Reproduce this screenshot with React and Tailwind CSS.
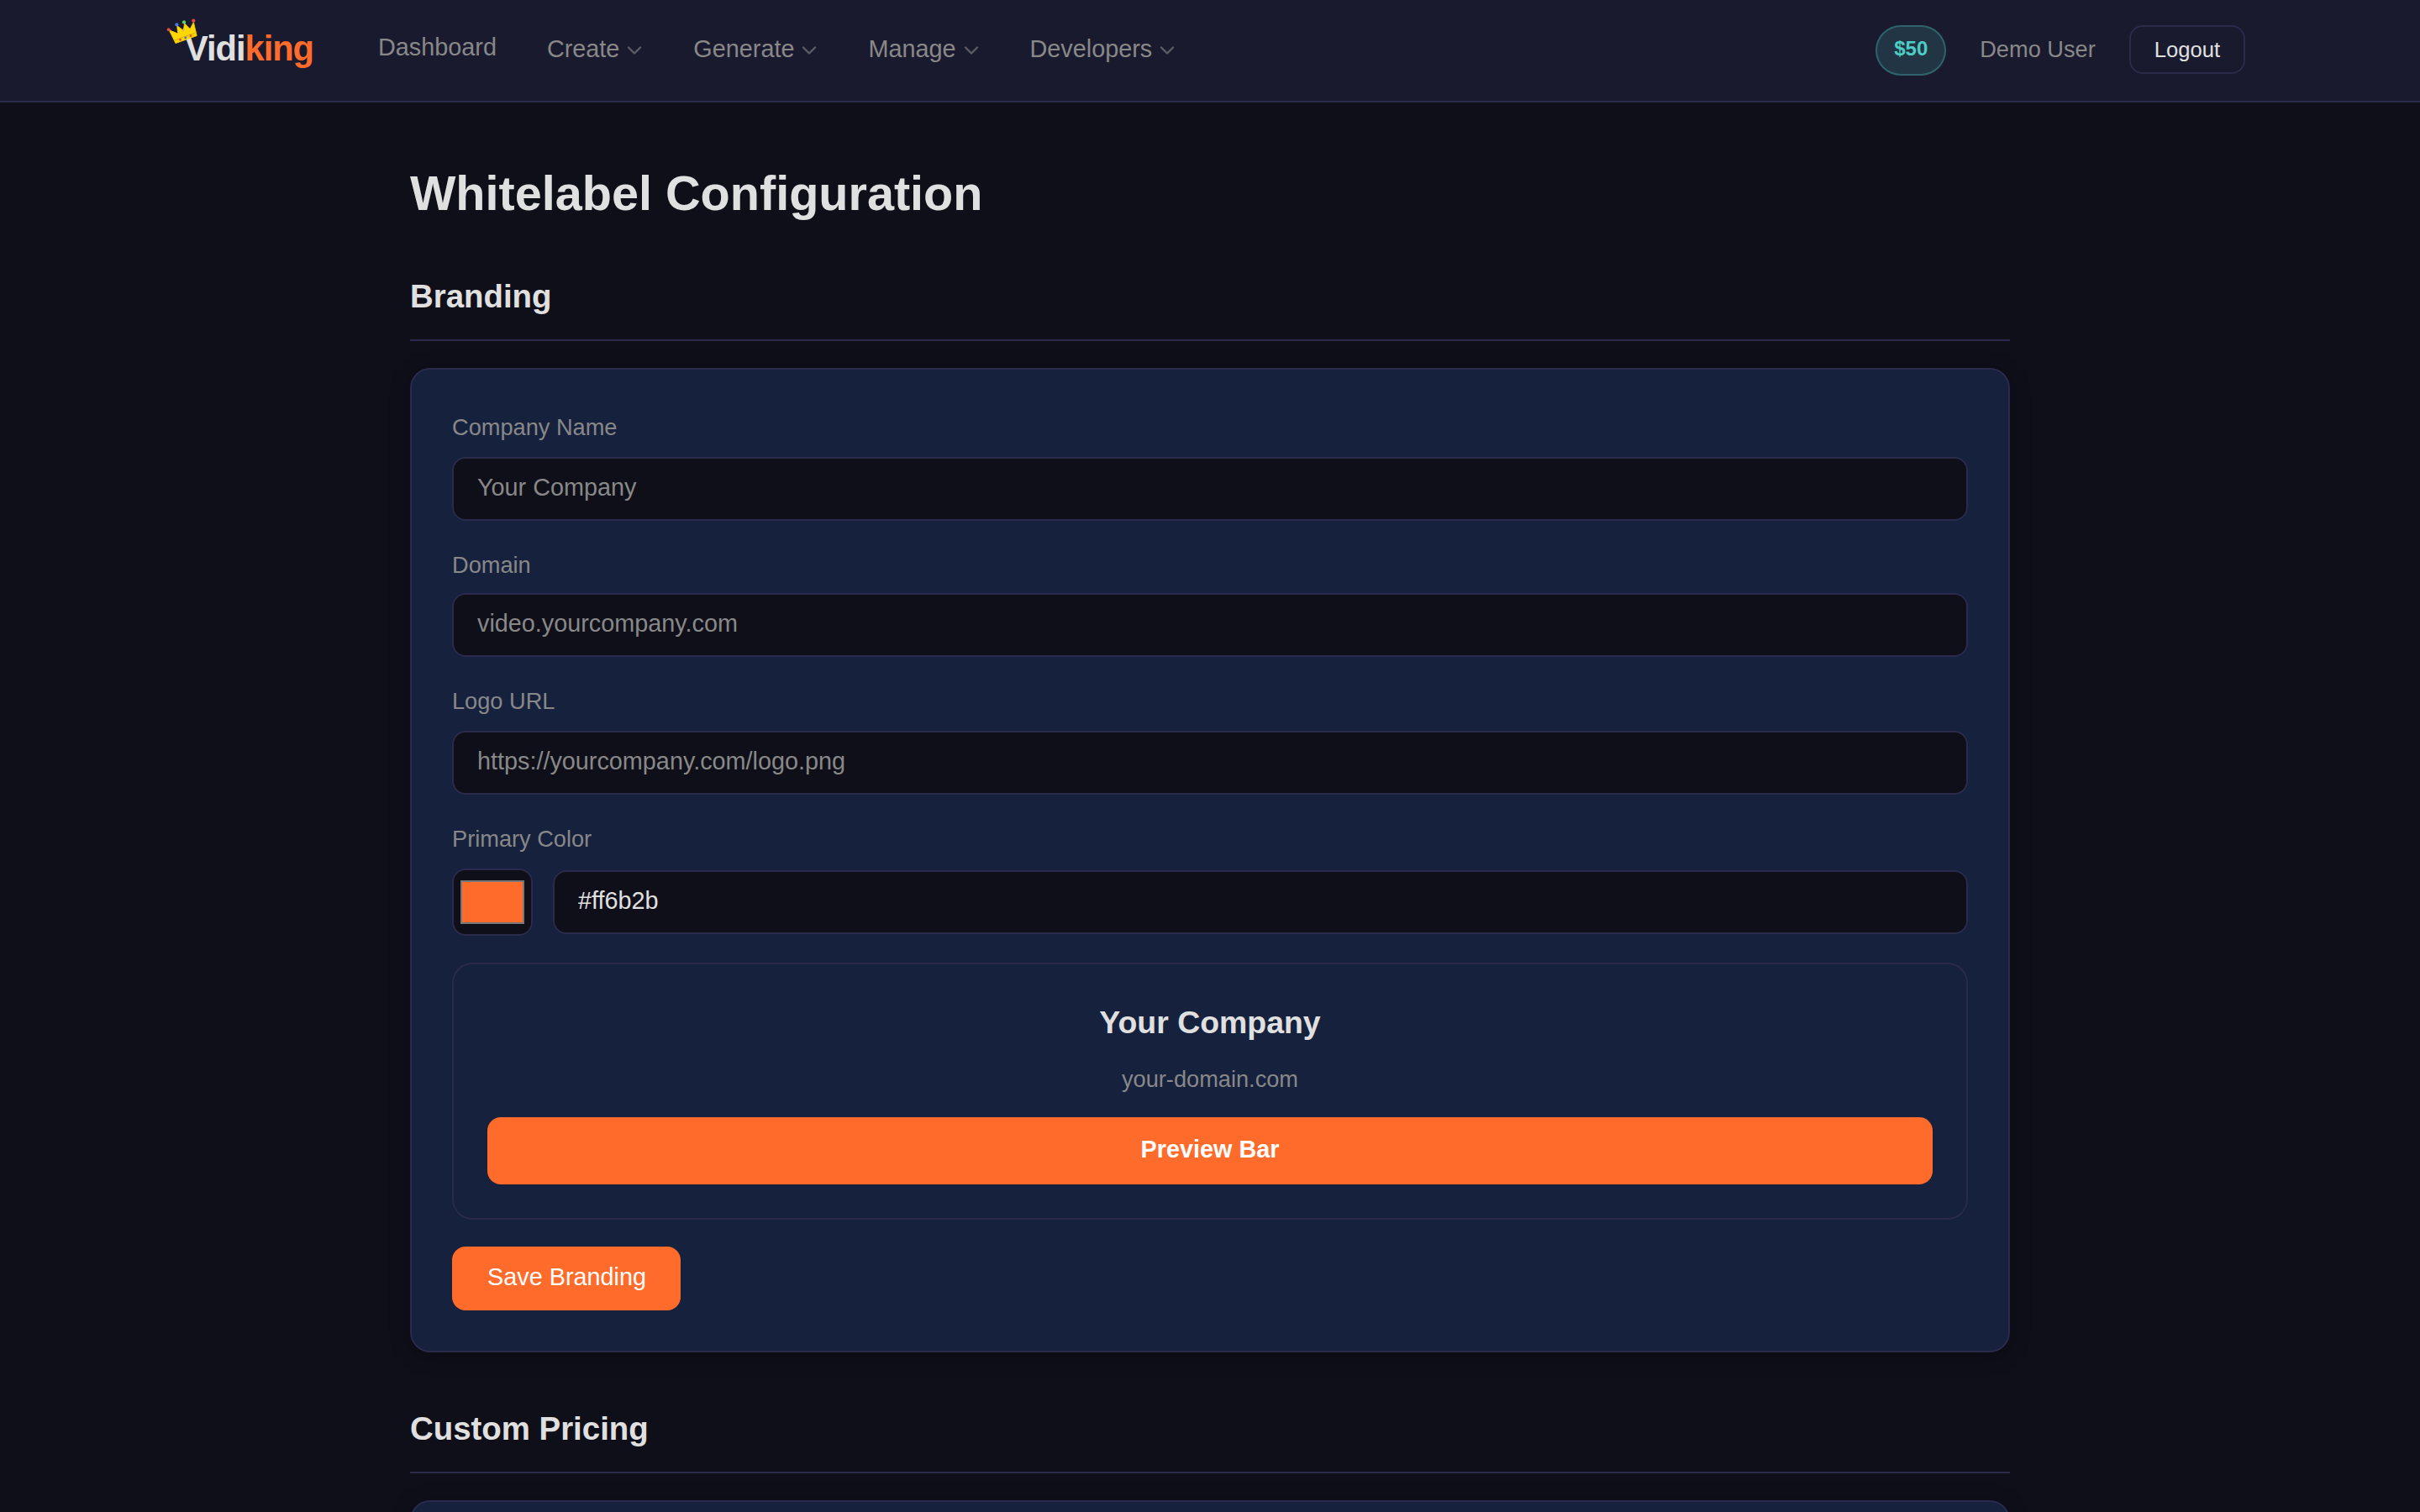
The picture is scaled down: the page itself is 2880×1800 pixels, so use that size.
import React, { useState } from "react";

const menus = ["Create", "Generate", "Manage", "Developers"];

const Crown = () => (
  <svg
    className="absolute top-5 -left-[14px] h-10 w-12"
    viewBox="0 0 48 40"
    fill="none"
  >
    <path
      d="M15 31.6 L7.2 15.8 L17.8 20 L16.6 10.5 L24.3 16.2 L25.6 7.8 L32.2 14.6 L36.4 6.4 L40.2 22.6 Z"
      fill="#ffd700"
      stroke="#ffd700"
      strokeWidth="0.8"
      strokeLinejoin="round"
    />
    <path d="M13.5 28 L39.5 18.7" stroke="#d4a017" strokeWidth="0.8" />
    <circle cx="24" cy="16" r="1.5" fill="#d9c04a" />
    <circle cx="6.7" cy="15.3" r="2" fill="#e54848" />
    <circle cx="16.4" cy="9.4" r="2.1" fill="#4876e5" />
    <circle cx="25" cy="6.4" r="2.1" fill="#48e05a" />
    <circle cx="36.3" cy="4.7" r="2.1" fill="#e54848" />
    <circle cx="20.6" cy="27.3" r="1.4" fill="#e54848" />
    <circle cx="26.8" cy="25" r="1.4" fill="#4876e5" />
    <circle cx="33" cy="22.7" r="1.4" fill="#e54848" />
  </svg>
);

const Chevron = () => (
  <svg className="mt-[2px] h-5 w-5 opacity-60" viewBox="0 0 20 20" fill="none">
    <path
      d="M3 6.5 L10 13.5 L17 6.5"
      stroke="currentColor"
      strokeWidth="2.4"
      strokeLinecap="round"
      strokeLinejoin="round"
    />
  </svg>
);

const Navbar = () => (
  <nav className="h-[122px] border-b-2 border-[#2a2a4a] bg-[#1a1a2e]">
    <div className="mx-auto flex h-[120px] w-[2464px] items-center">
      <div className="relative flex h-full items-center pb-[5px] pl-3 text-[41.6px] leading-[50px] font-bold tracking-[-1px]">
        <span>
          Vidi<span className="text-[#ff6b2b]">king</span>
        </span>
        <Crown />
      </div>

      <div className="mb-[2px] ml-[77px] flex items-center gap-[60px] text-[28.8px] text-[#888]">
        <a className="-mt-1">Dashboard</a>
        {menus.map((menu) => (
          <button key={menu} className="flex items-center gap-2">
            {menu}
            <Chevron />
          </button>
        ))}
      </div>

      <div className="ml-auto flex items-center gap-10">
        <span className="flex h-[60px] items-center rounded-full border-2 border-[#4ecdc4]/30 bg-[#4ecdc4]/15 px-5 pb-[4px] text-[24px] font-bold text-[#4ecdc4]">
          $50
        </span>
        <span className="mb-[2px] text-[27.2px] text-[#888]">Demo User</span>
        <button className="mb-[2px] h-[58px] rounded-[16px] border-2 border-[#2a2a4a] px-7 text-[25.6px]">
          Logout
        </button>
      </div>
    </div>
  </nav>
);

const SectionTitle = ({ children }) => (
  <h2 className="mb-8 h-[80px] border-b-2 border-[#2a2a4a] text-[38.4px] leading-[53px] font-bold">
    {children}
  </h2>
);

const Card = ({ children }) => (
  <div className="rounded-[24px] border-2 border-[#2a2a4a] bg-[#16213e] p-12 shadow-[0_4px_24px_rgba(0,0,0,0.3)]">
    {children}
  </div>
);

const Field = ({ label, children, labelClass = "mb-[15px]" }) => (
  <div className="mb-8">
    <label
      className={`block text-[27.2px] leading-[41px] text-[#888] ${labelClass}`}
    >
      {label}
    </label>
    {children}
  </div>
);

const TextInput = (props) => (
  <input
    type="text"
    className="block h-[76px] w-full min-w-0 rounded-[16px] border-2 border-[#2a2a4a] bg-[#0f0f1a] px-7 pb-[4px] text-[28.8px] placeholder:text-[#888]"
    {...props}
  />
);

const App = () => {
  const [company, setCompany] = useState("");
  const [domain, setDomain] = useState("");
  const [logo, setLogo] = useState("");
  const [color, setColor] = useState("#ff6b2b");

  return (
    <div className="h-[1800px] overflow-hidden bg-[#0f0f1a] font-['Liberation_Sans',Arial,sans-serif] text-[#e0e0e0]">
      <Navbar />

      <main className="mx-auto w-[1904px] pt-[64px]">
        <h1 className="mb-[51px] text-[57.6px] leading-[89px] font-bold">
          Whitelabel Configuration
        </h1>

        <SectionTitle>Branding</SectionTitle>
        <Card>
          <Field label="Company Name">
            <TextInput
              placeholder="Your Company"
              value={company}
              onChange={(e) => setCompany(e.target.value)}
            />
          </Field>
          <Field label="Domain" labelClass="mb-[13px]">
            <TextInput
              placeholder="video.yourcompany.com"
              value={domain}
              onChange={(e) => setDomain(e.target.value)}
            />
          </Field>
          <Field label="Logo URL">
            <TextInput
              placeholder="https://yourcompany.com/logo.png"
              value={logo}
              onChange={(e) => setLogo(e.target.value)}
            />
          </Field>
          <Field label="Primary Color">
            <div className="flex items-center gap-6">
              <div className="h-[80px] w-24 shrink-0 rounded-[16px] border-2 border-[#2a2a4a] bg-[#0f0f1a] px-2 py-3">
                <div
                  className="h-[52px] border-2 border-[#777]"
                  style={{ backgroundColor: color }}
                />
              </div>
              <TextInput
                value={color}
                onChange={(e) => setColor(e.target.value)}
              />
            </div>
          </Field>

          {/* live preview of the branding */}
          <div className="mb-8 h-[306px] rounded-[24px] border-2 border-[#2a2a4a] p-10 text-center">
            <h3 className="text-[37.44px] leading-[58px] font-bold">
              {company || "Your Company"}
            </h3>
            <p className="mt-[17px] text-[27.2px] leading-[43px] text-[#888]">
              {domain || "your-domain.com"}
            </p>
            <div
              className="mt-6 h-[80px] rounded-[16px] text-[28.8px] leading-[76px] font-bold text-white"
              style={{ backgroundColor: color }}
            >
              Preview Bar
            </div>
          </div>

          <button className="block h-[76px] w-[272px] rounded-[16px] bg-[#ff6b2b] pb-[2px] pl-[1px] text-[28.8px] text-white">
            Save Branding
          </button>
        </Card>

        <div className="pt-[64px]">
          <SectionTitle>Custom Pricing</SectionTitle>
          <Card />
        </div>
      </main>
    </div>
  );
};

export default App;
